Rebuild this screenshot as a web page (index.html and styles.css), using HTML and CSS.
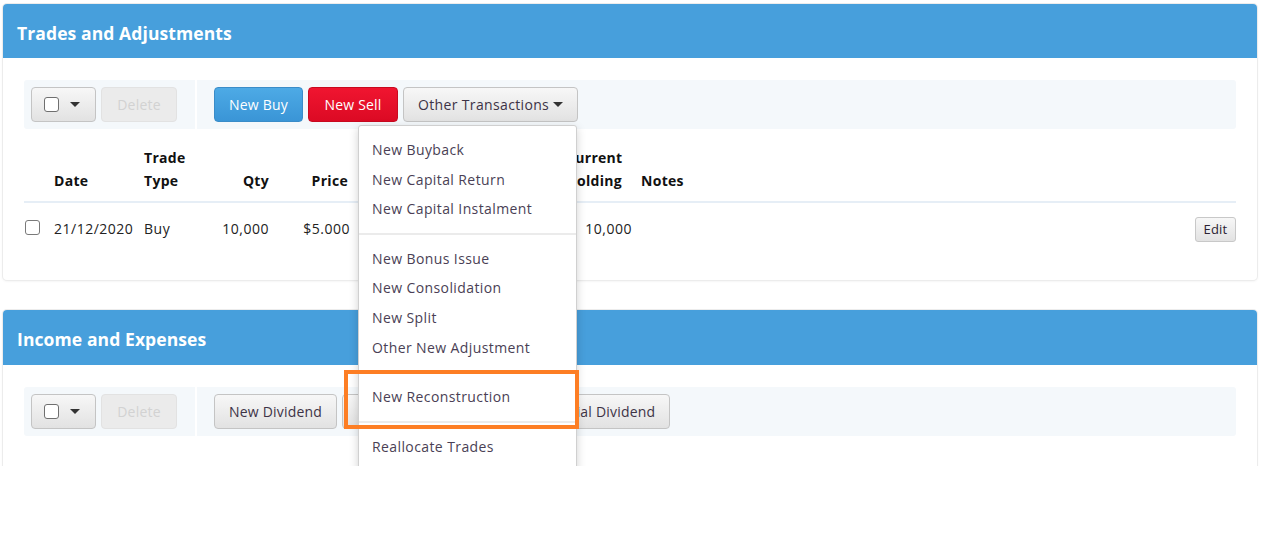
FILE: index.html
```html
<!DOCTYPE html>
<html>
<head>
<meta charset="utf-8">
<link rel="stylesheet" href="styles.css">
</head>
<body>
<div class="viewport">
  <section class="panel">
    <header class="panel-head">Trades and Adjustments</header>
    <div class="panel-body">
      <div class="toolbar">
        <div class="tb-group left">
          <button class="btn btn-check"><span class="cb"></span><span class="caret"></span></button>
          <button class="btn btn-disabled">Delete</button>
        </div>
        <div class="tb-group right">
          <button class="btn btn-blue">New Buy</button>
          <button class="btn btn-red">New Sell</button>
          <div class="dd">
            <button class="btn btn-default btn-other">Other Transactions <span class="caret"></span></button>
            <ul class="menu">
              <li>New Buyback</li>
              <li>New Capital Return</li>
              <li>New Capital Instalment</li>
              <li class="divider"></li>
              <li>New Bonus Issue</li>
              <li>New Consolidation</li>
              <li>New Split</li>
              <li>Other New Adjustment</li>
              <li class="divider"></li>
              <li class="hl-item">New Reconstruction</li>
              <li class="divider"></li>
              <li>Reallocate Trades</li>
            </ul>
          </div>
        </div>
      </div>
      <table class="grid">
        <colgroup>
          <col class="c-chk"><col class="c-date"><col class="c-type"><col class="c-qty"><col class="c-price"><col class="c-brok"><col class="c-val"><col class="c-hold"><col class="c-notes"><col class="c-act">
        </colgroup>
        <thead>
          <tr>
            <th></th>
            <th>Date</th>
            <th>Trade<br>Type</th>
            <th class="num">Qty</th>
            <th class="num price">Price</th>
            <th class="num">Brokerage</th>
            <th class="num">Value</th>
            <th>Current<br>Holding</th>
            <th>Notes</th>
            <th></th>
          </tr>
        </thead>
        <tbody>
          <tr>
            <td class="chk"><span class="cb"></span></td>
            <td>21/12/2020</td>
            <td>Buy</td>
            <td class="num">10,000</td>
            <td class="num">$5.000</td>
            <td class="num">$0.00</td>
            <td class="num">$50,000.00</td>
            <td class="num hold">10,000</td>
            <td></td>
            <td class="act"><button class="btn btn-edit">Edit</button></td>
          </tr>
        </tbody>
      </table>
    </div>
  </section>

  <section class="panel panel2">
    <header class="panel-head">Income and Expenses</header>
    <div class="panel-body">
      <div class="toolbar">
        <div class="tb-group left">
          <button class="btn btn-check"><span class="cb"></span><span class="caret"></span></button>
          <button class="btn btn-disabled">Delete</button>
        </div>
        <div class="tb-group right">
          <button class="btn btn-default">New Dividend</button>
          <button class="btn btn-default btn-mid">New Other Income</button>
          <button class="btn btn-default">New Special Dividend</button>
        </div>
      </div>
    </div>
  </section>
</div>
<div class="highlight"></div>
</body>
</html>
```

FILE: styles.css
```css
* { box-sizing: border-box; }
html, body { margin: 0; padding: 0; background: #fff; }
body {
  font-family: "Open Sans", "Noto Sans", sans-serif;
  font-size: 14px;
  color: #222;
  width: 1262px;
  height: 550px;
  position: relative;
  overflow: hidden;
}
.viewport {
  height: 466px;
  overflow: hidden;
  padding: 4px 5px 0 3px;
}
.panel {
  background: #fff;
  border-radius: 4px;
  box-shadow: 0 0 0 1px #ececec, 0 1px 3px rgba(0,0,0,0.08);
}
.panel2 { margin-top: 30px; }
.panel-head {
  background: #479fdc;
  color: #fff;
  font-weight: 700;
  font-size: 17.5px;
  height: 54px;
  line-height: 58px;
  padding-left: 14px;
  border-radius: 4px 4px 0 0;
  letter-spacing: 0.1px;
}
.panel2 .panel-head { height: 55px; line-height: 59px; }
.panel-body { padding: 22px 21px 26px 21px; }
.panel2 .panel-body { padding-bottom: 60px; }
.toolbar {
  display: flex;
  gap: 2px;
  height: 49px;
}
.tb-group {
  background: #f4f8fb;
  display: flex;
  align-items: center;
  gap: 5px;
}
.tb-group.left { width: 171px; padding-left: 7px; border-radius: 3px 0 0 3px; }
.tb-group.right { flex: 1; padding-left: 17px; border-radius: 0 3px 3px 0; }
.btn {
  font-family: inherit;
  font-size: 14px;
  height: 35px;
  padding: 0 14px;
  border-radius: 4px;
  border: 1px solid #c4c4c4;
  background: linear-gradient(#f7f7f7, #e2e2e2);
  color: #3d3346;
  cursor: pointer;
  display: inline-flex;
  align-items: center;
  white-space: nowrap;
  letter-spacing: 0.2px;
}
.btn-other { letter-spacing: 0.35px; }
.btn-check { width: 65px; padding: 0 0 0 12px; gap: 11px; }
.btn-disabled {
  width: 76px;
  justify-content: center;
  padding: 0;
  background: #ebebeb;
  border-color: #e2e2e2;
  color: #d2d2d2;
}
.btn-blue {
  background: linear-gradient(#4daae6, #3a95d6);
  border-color: #3a8cc8;
  color: #fff;
  width: 89px;
  justify-content: center;
  padding: 0;
}
.btn-red {
  background: linear-gradient(#f01530, #dc0a24);
  border-color: #c80a20;
  color: #fff;
  width: 90px;
  justify-content: center;
  padding: 0;
}
.btn-default { padding: 0 14px; }
.btn-default.btn-mid { padding: 0 4px 0 17px; }
.cb {
  display: inline-block;
  width: 15px;
  height: 15px;
  border: 1.5px solid #6f6f6f;
  border-radius: 3px;
  background: #fff;
}
.caret {
  display: inline-block;
  width: 0; height: 0;
  border-left: 5px solid transparent;
  border-right: 5px solid transparent;
  border-top: 5px solid #333;
  margin-left: 4px;
}
.btn-check .caret { margin-left: 0; }
.dd { position: relative; }
.menu {
  position: absolute;
  top: 38px;
  left: -45px;
  width: 219px;
  margin: 0;
  padding: 9px 0 40px;
  list-style: none;
  background: #fff;
  border: 1px solid #d0d0d0;
  border-radius: 3px;
  box-shadow: 0 3px 10px rgba(0,0,0,0.18);
  z-index: 5;
}
.menu li {
  height: 29.6px;
  line-height: 29.6px;
  padding-left: 13px;
  color: #4a3f55;
  white-space: nowrap;
  letter-spacing: 0.4px;
}
.menu li.divider {
  height: 2px;
  margin: 9px 0;
  background: #ebebeb;
  padding: 0;
}
.grid {
  margin-top: 10px;
  width: 100%;
  border-collapse: collapse;
  table-layout: fixed;
}
.c-chk { width: 24px; }
.c-date { width: 90px; }
.c-type { width: 62px; }
.c-qty { width: 75px; }
.c-price { width: 81px; }
.c-brok { width: 104px; }
.c-val { width: 100px; }
.c-hold { width: 75px; }
.c-act { width: 60px; }
.grid th {
  font-weight: 700;
  text-align: left;
  vertical-align: bottom;
  line-height: 23px;
  padding: 7px 6px 9px;
  border-bottom: 2px solid #e6eef6;
  color: #111;
  white-space: nowrap;
  letter-spacing: 0.3px;
}
.grid td {
  padding: 12px 6px;
  line-height: 25px;
  color: #222;
  vertical-align: middle;
  white-space: nowrap;
  letter-spacing: 0.5px;
}
.grid .num { text-align: right; }
.grid th.num { text-align: right; }
.grid th.price { padding-right: 8px; }
.grid td.hold { padding-right: 3px; }
.grid td.chk { padding: 0 0 0 1px; }
.grid td.chk .cb { vertical-align: middle; border-color: #7a7a7a; position: relative; top: -3px; }
.grid td.act { text-align: right; padding-right: 0; }
.btn-edit {
  height: 25px;
  width: 41px;
  padding: 0;
  justify-content: center;
  font-size: 13px;
  border-radius: 3px;
  color: #2b2233;
  border-color: #c8c8c8;
  vertical-align: middle;
}
.highlight {
  position: absolute;
  left: 344px;
  top: 370px;
  width: 235px;
  height: 59px;
  border: 4px solid #fd7e24;
  z-index: 10;
}
```
